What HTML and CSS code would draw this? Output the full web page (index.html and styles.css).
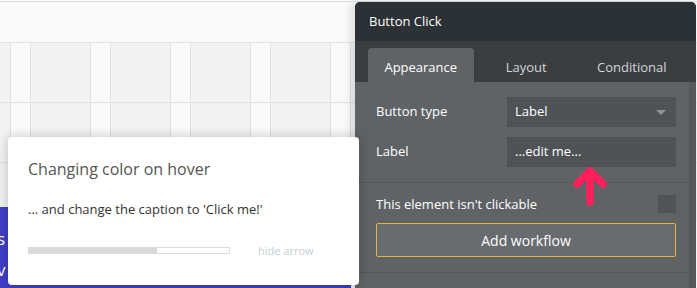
FILE: index.html
```html
<!DOCTYPE html>
<html lang="en">
<head>
    <meta charset="UTF-8">
    <title>Editor - Button Click</title>
    <link rel="stylesheet" href="styles.css">
</head>
<body>

<div class="editor">
    <!-- Page canvas -->
    <div class="canvas">
        <div class="canvas-top"></div>
        <div class="lane"></div>
        <div class="lane"></div>
        <div class="lane"></div>

        <div class="element-blue">
            <span class="cut-text first">s</span>
            <span class="cut-text second">v</span>
        </div>
        <div class="blue-pointer"></div>
    </div>

    <!-- Property editor -->
    <aside class="property-panel">
        <div class="panel-header">Button Click</div>
        <ul class="panel-tabs">
            <li class="active">Appearance</li>
            <li>Layout</li>
            <li>Conditional</li>
        </ul>
        <div class="panel-body">
            <div class="panel-content">
                <div class="field-row">
                    <label>Button type</label>
                    <div class="field-input select">Label<span class="caret"></span></div>
                </div>
                <div class="field-row">
                    <label>Label</label>
                    <div class="field-input">...edit me...</div>
                </div>
                <div class="panel-section">
                    <div class="check-row">
                        <span>This element isn't clickable</span>
                        <span class="checkbox"></span>
                    </div>
                    <button class="workflow-btn">Add workflow</button>
                </div>
            </div>
            <div class="panel-scroll"></div>
        </div>
    </aside>

    <!-- Lesson tooltip -->
    <div class="lesson-tip">
        <h2>Changing color on hover</h2>
        <p>... and change the caption to 'Click me!'</p>
        <div class="tip-footer">
            <div class="progress"><div class="progress-fill" style="width: 64%"></div></div>
            <span class="hide-arrow">hide arrow</span>
        </div>
    </div>

    <svg class="hint-arrow" width="40" height="44" viewBox="0 0 40 44">
        <path d="M20 37 L20 7 M7 19 L20 6 L33 19" fill="none" stroke="#ff1f5b" stroke-width="7.5" stroke-linecap="round" stroke-linejoin="round"/>
    </svg>
</div>

</body>
</html>
```

FILE: styles.css
```css
/* Basic reset */
* {
    margin: 0;
    padding: 0;
    box-sizing: border-box;
}

body {
    font-family: "Open Sans", Arial, sans-serif;
    background-color: #fafafa;
    overflow: hidden;
}

.editor {
    position: relative;
    width: 697px;
    height: 288px;
    overflow: hidden;
}

/* Canvas styles */
.canvas {
    height: 100%;
    background-color: #fafafa;
    border-top: 1px solid #dedede;
    margin-top: 1px;
}

.canvas-top {
    height: 40px;
}

.lane {
    height: 60px;
    border-top: 1px solid #e2e2e2;
    background: repeating-linear-gradient(90deg, #e2e2e2 0 1px, #fafafa 1px 20px, #e2e2e2 20px 21px, #f2f2f2 21px 80px);
    background-position: 10px 0;
}

.element-blue {
    position: absolute;
    left: 0;
    top: 207px;
    width: 351px;
    height: 81px;
    background-color: #3f3fc6;
    color: white;
    font-size: 17px;
}

.cut-text {
    position: absolute;
    left: -3px;
}

.cut-text.first {
    top: 20px;
}

.cut-text.second {
    top: 51px;
}

.blue-pointer {
    position: absolute;
    left: 359px;
    top: 233px;
    width: 0;
    height: 0;
    border-top: 7px solid transparent;
    border-bottom: 7px solid transparent;
    border-left: 7px solid #3f3fc6;
}

/* Property panel styles */
.property-panel {
    position: absolute;
    left: 355px;
    top: 2px;
    width: 341px;
    height: 286px;
    background-color: #5f6366;
    border-radius: 5px 5px 0 0;
    color: white;
    font-size: 13px;
    display: flex;
    flex-direction: column;
    box-shadow: -4px 0 10px rgba(0, 0, 0, 0.12);
}

.panel-header {
    height: 39px;
    background-color: #2b3134;
    border-radius: 5px 5px 0 0;
    padding: 10px 14px;
    font-size: 13px;
}

.panel-tabs {
    list-style: none;
    display: flex;
    height: 41px;
    padding: 7px 0 0 13px;
    background-color: #3a3e41;
}

.panel-tabs li {
    width: 105.5px;
    text-align: center;
    padding-top: 10px;
    color: #d4d6d8;
    border-radius: 4px 4px 0 0;
}

.panel-tabs li.active {
    background-color: #5f6366;
    color: white;
}

.panel-body {
    flex: 1;
    display: flex;
}

.panel-content {
    flex: 1;
    padding-top: 15px;
}

.panel-scroll {
    width: 7px;
    background-color: #55595c;
}

.field-row {
    display: flex;
    align-items: center;
    margin: 0 13px 10px 21px;
}

.field-row label {
    width: 131px;
    padding-bottom: 3px;
}

.field-input {
    position: relative;
    flex: 1;
    height: 30px;
    line-height: 29px;
    padding-left: 8px;
    background-color: #4f5356;
}

.caret {
    position: absolute;
    right: 10px;
    top: 13px;
    border-left: 5px solid transparent;
    border-right: 5px solid transparent;
    border-top: 5px solid #8e9296;
}

.panel-section {
    margin-top: 15px;
    border-top: 1px solid #54585b;
    border-bottom: 1px solid #54585b;
    padding: 12px 13px 15px 21px;
}

.check-row {
    display: flex;
    justify-content: space-between;
    align-items: center;
    height: 18px;
}

.checkbox {
    width: 18px;
    height: 18px;
    background-color: #505457;
}

.workflow-btn {
    display: block;
    width: 100%;
    height: 34px;
    margin-top: 10px;
    background-color: #686c6f;
    border: 1px solid #e6b43b;
    border-radius: 2px;
    color: white;
    font-family: "Open Sans", Arial, sans-serif;
    font-size: 14px;
}

/* Lesson tooltip styles */
.lesson-tip {
    position: absolute;
    left: 8px;
    top: 137px;
    width: 351px;
    height: 148px;
    background-color: white;
    border-radius: 4px;
    box-shadow: 0 0 12px rgba(0, 0, 0, 0.22);
    padding: 21px 20px 0 20px;
}

.lesson-tip h2 {
    font-size: 16px;
    font-weight: normal;
    color: #555;
}

.lesson-tip p {
    margin-top: 20px;
    font-size: 13px;
    color: #333;
}

.tip-footer {
    display: flex;
    align-items: center;
    margin-top: 25px;
}

.progress {
    width: 202px;
    height: 7px;
    border: 1px solid #dcdcdc;
    background-color: white;
}

.progress-fill {
    height: 100%;
    background-color: #d9d9d9;
}

.hide-arrow {
    margin-left: 28px;
    font-size: 11px;
    color: #c6ccd1;
}

.hint-arrow {
    position: absolute;
    left: 570px;
    top: 165px;
}
```
